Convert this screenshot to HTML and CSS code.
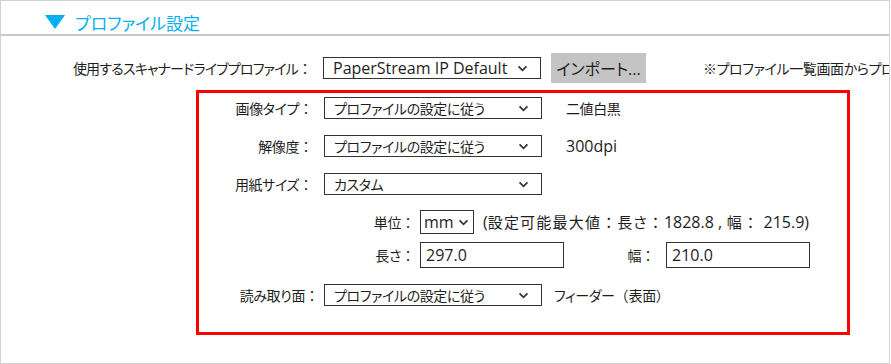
FILE: index.html
```html
<!DOCTYPE html>
<html lang="ja">
<head>
  <meta charset="UTF-8">
  <title>プロファイル設定</title>
  <link rel="stylesheet" href="styles.css">
</head>
<body>
  <div class="panel">
    <div class="panel-head">
      <svg class="head-arrow" viewBox="0 0 20 14"><polygon points="0,0 20,0 10,14" fill="#00b0f0"></polygon></svg>
      <h1>プロファイル設定</h1>
    </div>

    <div class="row row-profile">
      <span class="label label-main">使用するスキャナードライブプロファイル<span class="fw">：</span></span>
      <div class="select">
        <span class="latin">PaperStream IP Default</span>
        <svg class="chev" viewBox="0 0 12 8"><polyline points="1.5,1.5 6,6 10.5,1.5"></polyline></svg>
      </div>
      <button class="btn-import">インポート<span class="latin">...</span></button>
      <span class="note">※プロファイル一覧画面からプロファイルを選択できます</span>
    </div>

    <div class="highlight">
      <div class="row row-first">
        <span class="label label-box">画像タイプ<span class="fw">：</span></span>
        <div class="select">
          <span>プロファイルの設定に従う</span>
          <svg class="chev" viewBox="0 0 12 8"><polyline points="1.5,1.5 6,6 10.5,1.5"></polyline></svg>
        </div>
        <span class="value">二値白黒</span>
      </div>

      <div class="row">
        <span class="label label-box">解像度<span class="fw">：</span></span>
        <div class="select">
          <span>プロファイルの設定に従う</span>
          <svg class="chev" viewBox="0 0 12 8"><polyline points="1.5,1.5 6,6 10.5,1.5"></polyline></svg>
        </div>
        <span class="value latin">300dpi</span>
      </div>

      <div class="row">
        <span class="label label-box">用紙サイズ<span class="fw">：</span></span>
        <div class="select">
          <span>カスタム</span>
          <svg class="chev" viewBox="0 0 12 8"><polyline points="1.5,1.5 6,6 10.5,1.5"></polyline></svg>
        </div>
      </div>

      <div class="row">
        <span class="label label-sub tight">単位<span class="fw">：</span></span>
        <div class="select select-unit">
          <span class="latin">mm</span>
          <svg class="chev" viewBox="0 0 12 8"><polyline points="1.5,1.5 6,6 10.5,1.5"></polyline></svg>
        </div>
        <span class="limits"><span class="latin">(</span>設定可能最大値<span class="fw">：</span>長さ<span class="fw">：</span><span class="latin">1828.8 ,</span> 幅<span class="fw">：</span> <span class="latin">215.9)</span></span>
      </div>

      <div class="row row-size">
        <span class="label label-sub tight">長さ<span class="fw">：</span></span>
        <input class="field latin" type="text" value="297.0">
        <span class="label label-width">幅<span class="fw">：</span></span>
        <input class="field latin" type="text" value="210.0">
      </div>

      <div class="row row-last">
        <span class="label label-box tight">読み取り面<span class="fw">：</span></span>
        <div class="select">
          <span>プロファイルの設定に従う</span>
          <svg class="chev" viewBox="0 0 12 8"><polyline points="1.5,1.5 6,6 10.5,1.5"></polyline></svg>
        </div>
        <span class="value value-side">フィーダー<span class="fw">（</span>表面<span class="fw">）</span></span>
      </div>
    </div>
  </div>
</body>
</html>
```

FILE: styles.css
```css
:root {
  --accent: #00b0f0;
  --line: #d2d2d2;
  --text: #1e1e1e;
  --red: #ff0000;
}

body {
  margin: 0;
  font-family: "Noto Sans CJK JP", "Noto Sans", sans-serif;
  font-feature-settings: "palt";
  font-size: 14px;
  letter-spacing: -0.4px;
  color: var(--text);
  background: white;
}

.panel {
  box-sizing: border-box;
  width: 890px;
  height: 364px;
  border: 1px solid var(--line);
  overflow: hidden;
}

.panel-head {
  display: flex;
  align-items: center;
  height: 24px;
  padding: 9px 0 0 44px;
  border-bottom: 2px solid #c8c8c8;
}

.head-arrow {
  width: 20px;
  height: 14px;
  margin-right: 10px;
}

h1 {
  margin: 0;
  font-size: 17px;
  font-weight: 400;
  letter-spacing: 0;
  color: var(--accent);
}

.row {
  display: flex;
  align-items: center;
  height: 30px;
  margin-top: 8px;
  white-space: nowrap;
}

.row-profile {
  margin-top: 17px;
}

.row-first {
  margin-top: 0;
}

.row-size {
  margin-top: 3px;
}

.row-last {
  margin-top: 10px;
}

.label {
  text-align: right;
  flex: none;
}

.fw {
  font-feature-settings: normal;
  letter-spacing: 0;
}

.label .fw {
  margin-right: 6px;
}

.label.tight .fw {
  margin-right: 0;
}

.label-main {
  width: 317px;
  letter-spacing: -0.8px;
}

.label-box {
  width: 120px;
}

.label-sub {
  width: 216px;
}

.label-width {
  width: 97px;
}

.latin {
  font-family: "Open Sans", "Noto Sans", sans-serif;
  font-feature-settings: normal;
  font-size: 16px;
  letter-spacing: 0;
}

.select {
  box-sizing: border-box;
  display: flex;
  align-items: center;
  justify-content: space-between;
  width: 218px;
  height: 22px;
  margin-left: 5px;
  padding: 0 12px 0 9px;
  border: 1px solid #333;
  background: white;
  flex: none;
}

.select-unit {
  width: 54px;
  height: 24px;
  padding: 0 4px 0 3px;
}

.chev {
  width: 11px;
  height: 7px;
  fill: none;
  stroke: #333;
  stroke-width: 2;
}

.btn-import {
  flex: none;
  width: 95px;
  height: 30px;
  margin-left: 10px;
  padding: 0;
  border: none;
  background: #c4c4c4;
  color: var(--text);
  font: inherit;
  font-size: 16px;
}

.note {
  flex: none;
  margin-left: 57px;
}

.highlight {
  box-sizing: border-box;
  width: 654px;
  height: 245px;
  margin: 7px 0 0 195px;
  border: 3px solid var(--red);
}

.value {
  margin-left: 24px;
}

.value-side {
  margin-left: 12px;
}

.limits {
  margin-left: 9px;
  font-size: 15px;
  letter-spacing: 1.2px;
}

.limits .fw {
  letter-spacing: 1px;
}

.limits .latin {
  font-size: 16px;
  letter-spacing: 0;
}

.field {
  box-sizing: border-box;
  width: 144px;
  height: 26px;
  margin-left: 5px;
  padding: 0 5px;
  border: 1px solid #333;
  color: var(--text);
}
```
